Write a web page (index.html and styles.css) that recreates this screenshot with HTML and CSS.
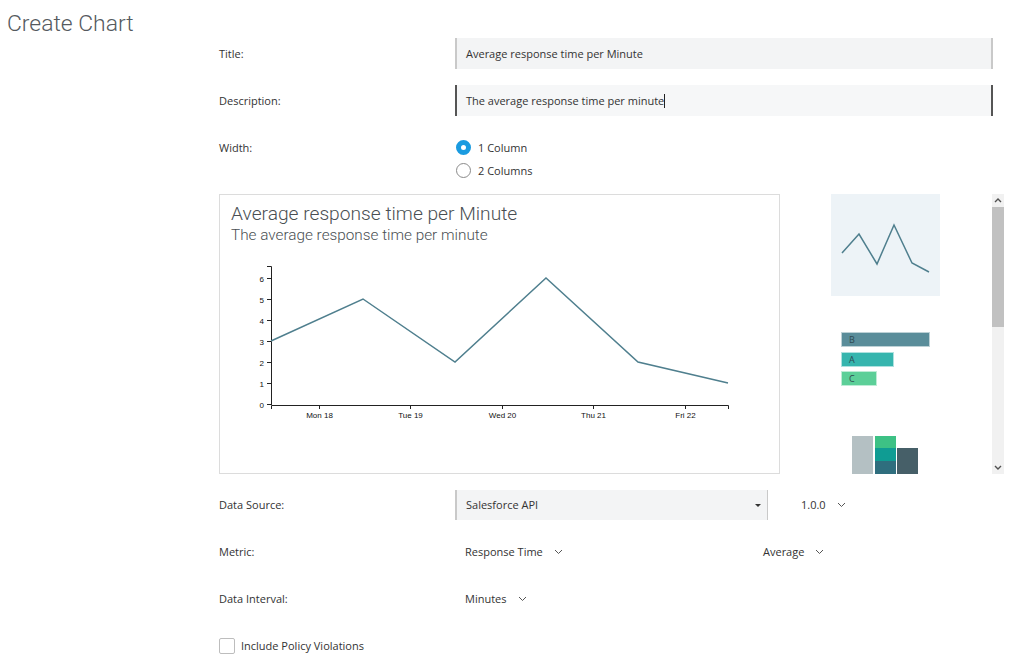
FILE: index.html
```html
<!DOCTYPE html>
<html lang="en">
<head>
<meta charset="utf-8">
<title>Create Chart</title>
<link rel="stylesheet" href="styles.css">
</head>
<body>
<h1 class="page-title">Create Chart</h1>
<form class="form">
  <div class="row">
    <label class="lbl">Title:</label>
    <div class="input">Average response time per Minute</div>
  </div>
  <div class="row">
    <label class="lbl">Description:</label>
    <div class="input input-focus">The average response time per minute<span class="cursor"></span></div>
  </div>
  <div class="row row-width">
    <label class="lbl">Width:</label>
    <div class="radios">
      <div class="radio-opt"><span class="radio radio-on"></span>1 Column</div>
      <div class="radio-opt"><span class="radio"></span>2 Columns</div>
    </div>
  </div>

  <div class="preview-row">
    <div class="preview">
      <div class="chart-title">Average response time per Minute</div>
      <div class="chart-sub">The average response time per minute</div>
      <svg class="chart" width="559" height="226" viewBox="0 0 559 226">
        <g class="axis">
          <path d="M47,18.5H51.5V157" />
          <path d="M51.5,161V157.5H508.5V161" />
          <line x1="47" y1="30.5" x2="51" y2="30.5"/>
          <line x1="47" y1="51.5" x2="51" y2="51.5"/>
          <line x1="47" y1="72.5" x2="51" y2="72.5"/>
          <line x1="47" y1="93.5" x2="51" y2="93.5"/>
          <line x1="47" y1="114.5" x2="51" y2="114.5"/>
          <line x1="47" y1="135.5" x2="51" y2="135.5"/>
          <line x1="47" y1="156.5" x2="51" y2="156.5"/>
          <line x1="99.5" y1="157" x2="99.5" y2="161"/>
          <line x1="190.5" y1="157" x2="190.5" y2="161"/>
          <line x1="282.5" y1="157" x2="282.5" y2="161"/>
          <line x1="373.5" y1="157" x2="373.5" y2="161"/>
          <line x1="465.5" y1="157" x2="465.5" y2="161"/>
        </g>
        <g class="ylabels">
          <text x="44" y="33.5">6</text>
          <text x="44" y="54.5">5</text>
          <text x="44" y="75.5">4</text>
          <text x="44" y="96.5">3</text>
          <text x="44" y="117.5">2</text>
          <text x="44" y="138.5">1</text>
          <text x="44" y="159.5">0</text>
        </g>
        <g class="xlabels">
          <text x="99.5" y="170">Mon 18</text>
          <text x="190.5" y="170">Tue 19</text>
          <text x="282.5" y="170">Wed 20</text>
          <text x="373.5" y="170">Thu 21</text>
          <text x="465.5" y="170">Fri 22</text>
        </g>
        <polyline class="series" points="51,93 143,51 235,114 326,30 418,114 508,135"/>
      </svg>
    </div>

    <div class="gallery">
      <div class="thumbs">
        <div class="thumb thumb-line">
          <svg width="109" height="102" viewBox="0 0 109 102">
            <polyline class="series" points="11,59 28,40 46,70 63,31 81,69 98,78"/>
          </svg>
        </div>
        <div class="thumb-bars">
          <div class="hbar hbar-b" style="width:89px">B</div>
          <div class="hbar hbar-a" style="width:53px">A</div>
          <div class="hbar hbar-c" style="width:36px">C</div>
        </div>
        <div class="thumb-stack">
          <div class="vbar vbar-gray"></div>
          <div class="vstack">
            <div class="seg seg-green"></div>
            <div class="seg seg-teal"></div>
            <div class="seg seg-dark"></div>
          </div>
          <div class="vbar vbar-slate"></div>
        </div>
      </div>
      <div class="scrollbar">
        <div class="sb-btn">
          <svg width="8" height="5" viewBox="0 0 8 5"><polyline points="1,4 4,1 7,4"/></svg>
        </div>
        <div class="sb-thumb"></div>
        <div class="sb-space"></div>
        <div class="sb-btn">
          <svg width="8" height="5" viewBox="0 0 8 5"><polyline points="1,1 4,4 7,1"/></svg>
        </div>
      </div>
    </div>
  </div>

  <div class="row">
    <label class="lbl">Data Source:</label>
    <div class="select">Salesforce API<span class="tri"></span></div>
    <div class="dd dd-version">1.0.0<svg class="chev" width="9" height="6" viewBox="0 0 9 6"><polyline points="1,1 4.5,4.5 8,1"/></svg></div>
  </div>
  <div class="row">
    <label class="lbl">Metric:</label>
    <div class="dd dd-metric">Response Time<svg class="chev" width="9" height="6" viewBox="0 0 9 6"><polyline points="1,1 4.5,4.5 8,1"/></svg></div>
    <div class="dd">Average<svg class="chev" width="9" height="6" viewBox="0 0 9 6"><polyline points="1,1 4.5,4.5 8,1"/></svg></div>
  </div>
  <div class="row">
    <label class="lbl">Data Interval:</label>
    <div class="dd dd-metric">Minutes<svg class="chev" width="9" height="6" viewBox="0 0 9 6"><polyline points="1,1 4.5,4.5 8,1"/></svg></div>
  </div>
  <div class="row">
    <div class="check-opt"><span class="checkbox"></span>Include Policy Violations</div>
  </div>
</form>
</body>
</html>
```

FILE: styles.css
```css
* { box-sizing: border-box; }

html, body {
  margin: 0;
  padding: 0;
  background: #ffffff;
}

body {
  font-family: "Open Sans", "Liberation Sans", sans-serif;
  font-size: 11px;
  color: #333333;
  width: 1024px;
  height: 660px;
  overflow: hidden;
}

.page-title {
  margin: 0;
  height: 38px;
  padding: 10px 0 0 7px;
  font-family: Roboto, "Liberation Sans", sans-serif;
  font-weight: 300;
  font-size: 22.9px;
  line-height: 28px;
  color: #555a5e;
}

.form {
  margin-left: 219px;
  width: 785px;
}

.row {
  display: flex;
  align-items: center;
  height: 31px;
  margin-bottom: 16px;
}

.lbl {
  width: 236px;
  flex: none;
  line-height: 31px;
}

.input {
  width: 538px;
  height: 31px;
  line-height: 31px;
  padding-left: 9px;
  background: #f3f4f5;
  border-left: 2px solid #c9c9c9;
  border-right: 2px solid #c9c9c9;
  color: #333;
}

.input-focus {
  background: #f6f7f8;
  border-left-color: #555;
  border-right-color: #555;
}

.cursor {
  display: inline-block;
  width: 1px;
  height: 14px;
  background: #222;
  vertical-align: -3px;
}

.row-width {
  align-items: flex-start;
  height: auto;
  margin-bottom: 12px;
}

.radios {
  padding-top: 4px;
}

.radio-opt {
  display: flex;
  align-items: center;
  height: 23px;
  margin-left: 1px;
}

.radio {
  width: 15px;
  height: 15px;
  border-radius: 50%;
  border: 1.5px solid #8a8a8a;
  margin-right: 7px;
  background: #fff;
}

.radio-on {
  border: 5px solid #1a9be0;
  background: #fff;
}

.preview-row {
  display: flex;
  height: 280px;
  margin-bottom: 15px;
}

.preview {
  width: 561px;
  height: 280px;
  border: 1px solid #dcdcdc;
  padding-top: 8px;
}

.chart-title {
  font-family: Roboto, "Liberation Sans", sans-serif;
  font-weight: 300;
  font-size: 19.2px;
  line-height: 22px;
  color: #4a4f53;
  padding-left: 11px;
}

.chart-sub {
  font-family: Roboto, "Liberation Sans", sans-serif;
  font-weight: 300;
  font-size: 15.3px;
  line-height: 20px;
  color: #4a4f53;
  padding-left: 11px;
}

.chart {
  display: block;
  margin-top: 3px;
}

.axis path, .axis line {
  fill: none;
  stroke: #222;
  stroke-width: 1;
}

.ylabels text, .xlabels text {
  font-family: "Liberation Sans", Arial, sans-serif;
  font-size: 8px;
  fill: #111;
}

.ylabels text { text-anchor: end; }
.xlabels text { text-anchor: middle; }

.series {
  fill: none;
  stroke: #4f7f8e;
  stroke-width: 1.5;
  stroke-linejoin: miter;
}

.gallery {
  display: flex;
  margin-left: 40px;
  width: 184px;
  height: 280px;
  overflow: hidden;
}

.thumbs {
  width: 172px;
  height: 280px;
  overflow: hidden;
}

.thumb {
  width: 109px;
  height: 102px;
  margin-left: 11px;
}

.thumb-line {
  background: #edf3f7;
}

.thumb svg { display: block; }

.thumb-bars {
  margin-top: 36px;
  margin-left: 21px;
}

.hbar {
  height: 15px;
  line-height: 14px;
  font-size: 9px;
  padding-left: 7px;
  color: #2f4a52;
  border: 1px solid rgba(255, 255, 255, 0.6);
  margin-bottom: 4.5px;
}

.hbar-b { background: #5a8d9a; }
.hbar-a { background: #36b5ae; }
.hbar-c { background: #5ccf98; }

.thumb-stack {
  display: flex;
  align-items: flex-end;
  margin-top: 50px;
  margin-left: 32px;
  height: 60px;
}

.vbar, .vstack {
  width: 21px;
  margin-right: 2px;
}

.vbar-gray {
  height: 60px;
  background: #b4c0c3;
}

.vstack {
  height: 60px;
  display: flex;
  flex-direction: column;
}

.seg-green { height: 12px; background: #3dc185; }
.seg-teal { height: 13px; background: #0f9c93; }
.seg-dark { flex: 1; background: #2f6e7e; }

.vbar-slate {
  height: 48px;
  background: #465f68;
  margin-right: 0;
  margin-left: -1px;
}

.scrollbar {
  width: 12px;
  height: 280px;
  background: #f1f1f1;
  display: flex;
  flex-direction: column;
}

.sb-btn {
  height: 13px;
  display: flex;
  align-items: center;
  justify-content: center;
}

.sb-btn polyline {
  fill: none;
  stroke: #505050;
  stroke-width: 1.4;
}

.sb-thumb {
  height: 120px;
  background: #c1c1c1;
}

.sb-space { flex: 1; }

.select {
  position: relative;
  width: 313px;
  height: 30px;
  line-height: 30px;
  padding-left: 9px;
  background: #f3f4f5;
  border-left: 2px solid #c9c9c9;
  border-right: 1px solid #c9c9c9;
}

.tri {
  position: absolute;
  right: 6px;
  top: 14px;
  width: 0;
  height: 0;
  border-left: 3px solid transparent;
  border-right: 3px solid transparent;
  border-top: 3px solid #333;
}

.dd {
  display: flex;
  align-items: center;
  color: #333;
}

.chev {
  margin-left: 11px;
}

.chev polyline {
  fill: none;
  stroke: #555;
  stroke-width: 1;
}

.dd-version {
  margin-left: 33px;
}

.dd-metric {
  width: 308px;
  padding-left: 10px;
}

.check-opt {
  display: flex;
  align-items: center;
}

.checkbox {
  width: 16px;
  height: 16px;
  border: 1px solid #bdbdbd;
  border-radius: 2px;
  margin-right: 6px;
  background: #fff;
}
```
